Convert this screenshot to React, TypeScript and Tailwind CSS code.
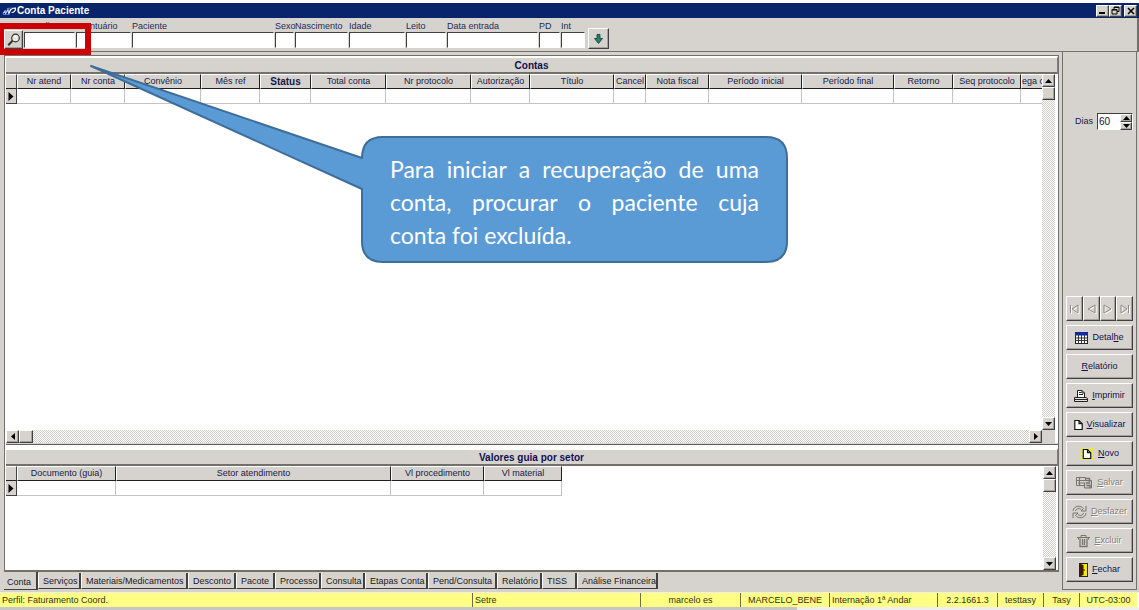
import React from "react";

const raised =
  "bg-[#d6d3ce] border border-t-white border-l-white border-r-[#404040] border-b-[#404040] shadow-[inset_-1px_-1px_0_#a5a29c]";
const dither =
  "bg-[repeating-conic-gradient(#ffffff_0_25%,#d0cdc8_0_50%)] bg-[length:2px_2px]";

type Field = { id: string; label: string; width: string };

const fields: Field[] = [
  { id: "atend", label: "Atendimento", width: "w-[52px]" },
  { id: "pront", label: "Prontuário", width: "w-[56px]" },
  { id: "pac", label: "Paciente", width: "w-[143px]" },
  { id: "sexo", label: "Sexo", width: "w-[20px]" },
  { id: "nasc", label: "Nascimento", width: "w-[54px]" },
  { id: "idade", label: "Idade", width: "w-[57px]" },
  { id: "leito", label: "Leito", width: "w-[41px]" },
  { id: "entrada", label: "Data entrada", width: "w-[92px]" },
  { id: "pd", label: "PD", width: "w-[22px]" },
  { id: "int", label: "Int", width: "w-[25px]" },
];

type Column = { label: string; width: string; bold?: boolean; clipped?: boolean };

const accountColumns: Column[] = [
  { label: "Nr atend", width: "w-[54px]" },
  { label: "Nr conta", width: "w-[54px]" },
  { label: "Convênio", width: "w-[76px]" },
  { label: "Mês ref", width: "w-[59px]" },
  { label: "Status", width: "w-[51px]", bold: true },
  { label: "Total conta", width: "w-[75px]" },
  { label: "Nr protocolo", width: "w-[85px]" },
  { label: "Autorização", width: "w-[59px]" },
  { label: "Título", width: "w-[84px]" },
  { label: "Cancel", width: "w-[32px]" },
  { label: "Nota fiscal", width: "w-[63px]" },
  { label: "Período inicial", width: "w-[93px]" },
  { label: "Período final", width: "w-[92px]" },
  { label: "Retorno", width: "w-[59px]" },
  { label: "Seq protocolo", width: "w-[68px]" },
  { label: "ega c", width: "w-[30px]", clipped: true },
];

const guideColumns: Column[] = [
  { label: "Documento (guia)", width: "w-[99px]" },
  { label: "Setor atendimento", width: "w-[275px]" },
  { label: "Vl procedimento", width: "w-[93px]" },
  { label: "Vl material", width: "w-[78px]" },
];

const tabs = [
  { label: "Conta", width: "w-[34px]" },
  { label: "Serviços", width: "w-[43px]" },
  { label: "Materiais/Medicamentos", width: "w-[107px]" },
  { label: "Desconto", width: "w-[48px]" },
  { label: "Pacote", width: "w-[39px]" },
  { label: "Processo", width: "w-[46px]" },
  { label: "Consulta", width: "w-[44px]" },
  { label: "Etapas Conta", width: "w-[63px]" },
  { label: "Pend/Consulta", width: "w-[69px]" },
  { label: "Relatório", width: "w-[45px]" },
  { label: "TISS", width: "w-[35px]" },
  { label: "Análise Financeira", width: "w-[81px]" },
];

const statusItems = [
  { text: "Setre", style: "w-[168px] pl-[2px]" },
  { text: "marcelo es", style: "w-[100px] text-center" },
  { text: "MARCELO_BENE", style: "w-[89px] text-center" },
  { text: "Internação 1ª Andar", style: "w-[108px] pl-[2px]" },
  { text: "2.2.1661.3", style: "w-[60px] text-center" },
  { text: "testtasy", style: "w-[46px] text-center" },
  { text: "Tasy", style: "w-[36px] text-center" },
  { text: "UTC-03:00", style: "w-[58px] text-center" },
];

function Arrow({ dir }: { dir: "up" | "down" | "left" | "right" }) {
  const d = {
    up: "M0 5 L3.500 1 L7 5Z",
    down: "M0 1 L3.500 5 L7 1Z",
    left: "M5 0 L1 3.500 L5 7Z",
    right: "M1 0 L5 3.500 L1 7Z",
  }[dir];
  const flat = dir === "up" || dir === "down";
  return (
    <svg width={flat ? 7 : 6} height={flat ? 6 : 7} viewBox={flat ? "0 0 7 6" : "0 0 6 7"} aria-hidden="true">
      <path d={d} fill="#000" />
    </svg>
  );
}

function ScrollButton({ dir, label }: { dir: "up" | "down" | "left" | "right"; label: string }) {
  return (
    <button aria-label={label} className={`${raised} flex size-[13px] shrink-0 items-center justify-center`}>
      <Arrow dir={dir} />
    </button>
  );
}

function VerticalScroll() {
  return (
    <div className={`${dither} flex w-[13px] shrink-0 flex-col`}>
      <ScrollButton dir="up" label="Rolar para cima" />
      <div className={`${raised} h-[13px]`} />
      <div className="flex-1" />
      <ScrollButton dir="down" label="Rolar para baixo" />
    </div>
  );
}

function SectionTitle({ children }: { children: React.ReactNode }) {
  return (
    <h2 className="h-[18px] shrink-0 border-t-2 border-r border-b-2 border-t-white border-r-[#808080] border-b-[#73706b] bg-[#d6d3ce] text-center text-[10px] leading-[15px] font-bold text-[#101050]">
      {children}
    </h2>
  );
}

function Grid({ columns }: { columns: Column[] }) {
  return (
    <table className="w-px table-fixed border-separate border-spacing-0 text-[#181848]">
      <thead>
        <tr>
          <th className="h-[15px] w-[11px] border-t border-r border-b border-t-white border-r-[#404040] border-b-[#202020] bg-[#d6d3ce] p-0" />
          {columns.map((c) => (
            <th
              key={c.label}
              className={`${c.width} h-[15px] border-t border-r border-b border-l border-t-white border-l-white border-r-[#202020] border-b-[#202020] bg-[#d6d3ce] p-0 leading-[13px] whitespace-nowrap ${c.bold ? "text-[10px] font-bold" : "font-normal"}`}
            >
              <div className={`flex ${c.clipped ? "justify-start" : "justify-center"}`}>{c.label}</div>
            </th>
          ))}
        </tr>
      </thead>
      <tbody>
        <tr>
          <td className="h-[15px] border-r border-b border-[#404040] bg-[#d6d3ce] p-0">
            <svg width="6" height="9" viewBox="0 0 6 9" className="mx-auto block" aria-hidden="true">
              <path d="M0.500 0 L5.500 4.500 L0.500 9Z" fill="#000" />
            </svg>
          </td>
          {columns.map((c) => (
            <td key={c.label} className="h-[15px] border-r border-b border-[#c4c4c4] bg-white p-0" />
          ))}
        </tr>
      </tbody>
    </table>
  );
}

function AppLogo() {
  return (
    <svg width="14" height="8" viewBox="0 0 14 8" aria-hidden="true">
      <path d="M1 6.500 L3 4 L3.500 6.500 L6 2.500 L6.500 6 L9 2" fill="none" stroke="#b9c8ff" strokeWidth="1.200" />
      <path d="M7 6.500 C8 2 10 1 13.500 1 C13.500 4 12 5.500 9.500 5.500" fill="none" stroke="#ffffff" strokeWidth="1.200" />
      <path d="M5 1.500 L10 1 M1 7.500 L8 7.300" stroke="#6f8ce8" strokeWidth="0.800" />
    </svg>
  );
}

function SearchIcon() {
  return (
    <svg width="14" height="14" viewBox="0 0 14 14" aria-hidden="true">
      <circle cx="8.500" cy="5" r="3.800" fill="#e9e9e6" stroke="#333" strokeWidth="1.200" />
      <path d="M7 4 Q8 2.800 9.500 3.200" fill="none" stroke="#fff" />
      <path d="M5.500 7.800 L1.200 12.200" stroke="#333" strokeWidth="2" />
    </svg>
  );
}

function DetailIcon() {
  return (
    <svg width="13" height="12" viewBox="0 0 13 12" aria-hidden="true">
      <rect x="0.500" y="0.500" width="12" height="11" fill="#fff" stroke="#222" />
      <rect x="0" y="0" width="13" height="3.500" fill="#1028a8" />
      <path d="M0 6H13M0 8.500H13M3.500 3V12M6.500 3V12M9.500 3V12" stroke="#333" />
    </svg>
  );
}

function PrintIcon() {
  return (
    <svg width="14" height="14" viewBox="0 0 14 14" fill="none" stroke="#222" aria-hidden="true">
      <path d="M3.500 8 V1.500 H8 L10.500 4 V8" fill="#fff" />
      <path d="M5 3.500H7.500M5 5.500H9M8 1.500V4H10.500" />
      <path d="M0.500 8.500H12L13.500 9.500V12.500H0.500Z" fill="#e6e4df" />
      <path d="M0.500 10.500H13" />
    </svg>
  );
}

function PageIcon({ glow = false }: { glow?: boolean }) {
  return (
    <svg width={glow ? 14 : 9} height="12" viewBox={glow ? "-2.5 0 14 12" : "0 0 9 12"} aria-hidden="true">
      {glow && <path d="M-1.500 0L10.500 12M10.500 0L-1.500 12M4.500 0V12M-2.500 6H11.500" stroke="#f7f000" strokeWidth="2" />}
      <path d="M0.800 1.500 H5 L8.200 4.700 V10.500 H0.800Z M5 1.500V4.700H8.200" fill="#fff" stroke="#111" strokeWidth="1.200" />
    </svg>
  );
}

function SaveIcon() {
  return (
    <svg width="17" height="13" viewBox="0 0 17 13" fill="none" stroke="#77756f" aria-hidden="true">
      <path d="M0.500 1.500H9.500V9.500H0.500Z M0.500 4.500H9.500M3.500 1.500V9.500M2 7H8" />
      <path d="M9.500 4.500H15.500V12H8.500V6.500" fill="#c9c6c1" />
      <path d="M10 2.500H13.500V6M10.500 9.500H14V12M10 7H14" strokeWidth="1.500" />
    </svg>
  );
}

function UndoIcon() {
  return (
    <svg width="15" height="14" viewBox="0 0 15 14" fill="none" stroke="#77756f" aria-hidden="true">
      <path d="M1 6C1.500 0.500 9 0 11.500 3.500M14 1V6H9L11.500 3.500" />
      <path d="M3.500 6C4 3.500 7.500 2.500 9.500 5" />
      <path d="M14 8C13.500 13.500 6 14 3.500 10.500M1 13V8H6L3.500 10.500" />
      <path d="M11.500 8C11 10.500 7.500 11.500 5.500 9" />
    </svg>
  );
}

function TrashIcon() {
  return (
    <svg width="13" height="14" viewBox="0 0 13 14" fill="none" stroke="#77756f" aria-hidden="true">
      <path d="M0 3.500H13M4 3V1.500H9V3M1.500 3.500V5.500M11.500 3.500V5.500" />
      <path d="M3 4.500V12.500H10V4.500M5.500 5V11M7.500 5V11" strokeWidth="1.300" />
    </svg>
  );
}

function DoorIcon() {
  return (
    <svg width="9" height="14" viewBox="0 0 9 14" aria-hidden="true">
      <rect x="0.500" y="0.500" width="8" height="13" fill="#f6e800" stroke="#222" />
      <path d="M0.500 0.500L4.500 2V12L0.500 13.500Z" fill="#3a1a08" />
      <path d="M5 6V8" stroke="#222" />
    </svg>
  );
}

type Action = { before: string; key: string; after: string; icon?: React.ReactNode; disabled?: boolean };

const actions: Action[] = [
  { before: "Detal", key: "h", after: "e", icon: <DetailIcon /> },
  { before: "", key: "R", after: "elatório" },
  { before: "", key: "I", after: "mprimir", icon: <PrintIcon /> },
  { before: "", key: "V", after: "isualizar", icon: <PageIcon /> },
  { before: "", key: "N", after: "ovo", icon: <PageIcon glow /> },
  { before: "", key: "S", after: "alvar", icon: <SaveIcon />, disabled: true },
  { before: "", key: "D", after: "esfazer", icon: <UndoIcon />, disabled: true },
  { before: "", key: "E", after: "xcluir", icon: <TrashIcon />, disabled: true },
  { before: "", key: "F", after: "echar", icon: <DoorIcon /> },
];

const navPaths = [
  { label: "Primeiro", d: "M1.500 1V9M9 1L3 5L9 9Z" },
  { label: "Anterior", d: "M9 1L2 5L9 9Z" },
  { label: "Próximo", d: "M2 1L9 5L2 9Z" },
  { label: "Último", d: "M9.500 1V9M2 1L8 5L2 9Z" },
];

function SidePanel() {
  return (
    <aside className="mr-[2px] flex w-[75px] shrink-0 flex-col border-r border-b border-l border-[#73706b] px-[3px] pb-[7px]">
      <div className="mt-[61px] flex items-center justify-end">
        <label htmlFor="dias" className="mr-1 text-[#181848]">
          Dias
        </label>
        <div className="flex h-[17px] w-[36px] border border-t-[#404040] border-r-white border-b-white border-l-[#404040] bg-white">
          <input id="dias" defaultValue="60" className="min-w-0 flex-1 bg-white pl-px text-[10px] text-[#101030] outline-none" />
          <div className="flex w-[12px] flex-col">
            <button aria-label="Aumentar" className={`${raised} flex flex-1 items-center justify-center`}>
              <Arrow dir="up" />
            </button>
            <button aria-label="Diminuir" className={`${raised} flex flex-1 items-center justify-center`}>
              <Arrow dir="down" />
            </button>
          </div>
        </div>
      </div>
      <div className="flex-1" />
      <div className="flex h-[25px]">
        {navPaths.map((n) => (
          <button key={n.label} disabled aria-label={n.label} className={`${raised} flex flex-1 items-center justify-center`}>
            <svg width="11" height="10" viewBox="0 0 11 10" fill="none" aria-hidden="true">
              <path d={n.d} stroke="#fff" transform="translate(1 1)" />
              <path d={n.d} stroke="#8d8a85" />
            </svg>
          </button>
        ))}
      </div>
      <div className="mt-1 flex flex-col gap-1">
        {actions.map((a) => (
          <button
            key={a.key}
            disabled={a.disabled}
            className={`${raised} flex h-[25px] items-center justify-center gap-1 ${a.disabled ? "text-[#85827c] [text-shadow:1px_1px_0_#fff]" : "text-[#101050]"}`}
          >
            {a.icon}
            <span>
              {a.before}
              <u>{a.key}</u>
              {a.after}
            </span>
          </button>
        ))}
      </div>
    </aside>
  );
}

function Callout() {
  return (
    <div className="pointer-events-none absolute top-[60px] left-[88px] h-[206px] w-[704px]">
      <svg width="704" height="206" viewBox="88 60 704 206" className="absolute inset-0" aria-hidden="true">
        <path
          d="M91 66 L362 158 Q362 137 383 137 H766 Q787 137 787 158 V241 Q787 262 766 262 H383 Q362 262 362 241 V189 Z"
          fill="#5b9bd5"
          stroke="#3f6d99"
          strokeWidth="2"
          strokeLinejoin="round"
        />
      </svg>
      <p className="relative mt-[93px] ml-[302px] w-[369px] text-justify font-['Lato','Noto_Sans',sans-serif] text-[23px] leading-[33px] text-white">
        Para iniciar a recuperação de uma conta, procurar o paciente cuja conta&nbsp;foi excluída.
      </p>
    </div>
  );
}

export default function App() {
  return (
    <div className="relative flex min-h-screen flex-col bg-[#d6d3ce] font-['Liberation_Sans',sans-serif] text-[9px] leading-[13px] text-[#101018]">
      <header className="flex h-[18px] items-center border-t-[3px] border-white bg-[#08246b] px-[2px] text-white">
        <AppLogo />
        <h1 className="ml-px flex-1 text-[10px] font-bold">Conta Paciente</h1>
        <div className="flex text-black">
          <button aria-label="Minimizar" className={`${raised} flex h-[12px] w-[13px] items-end justify-center pb-[2px]`}>
            <svg width="7" height="2" aria-hidden="true"><rect width="6" height="2" /></svg>
          </button>
          <button aria-label="Restaurar" className={`${raised} flex h-[12px] w-[13px] items-center justify-center`}>
            <svg width="9" height="9" viewBox="0 0 9 9" fill="none" stroke="#000" aria-hidden="true">
              <path d="M3 3V1H8V5.500H6M3 1.500H8M1 3.500H6V8H1ZM1 4H6" />
            </svg>
          </button>
          <button aria-label="Fechar janela" className={`${raised} ml-[2px] flex h-[12px] w-[13px] items-center justify-center`}>
            <svg width="8" height="8" viewBox="0 0 8 8" stroke="#000" strokeWidth="1.500" aria-hidden="true">
              <path d="M1 1L7 7M7 1L1 7" />
            </svg>
          </button>
        </div>
      </header>

      <div className="flex h-[34px] shrink-0 items-end border-r-2 border-b border-[#73706b] pb-[2px] pl-1">
        <button aria-label="Pesquisar" className={`${raised} mr-px flex size-[19px] items-center justify-center`}>
          <SearchIcon />
        </button>
        {fields.map((f) => (
          <div key={f.id} className={`${f.width} flex shrink-0 flex-col pr-px pb-px`}>
            <label htmlFor={f.id} className="h-[12px] leading-[12px] whitespace-nowrap text-[#282858]">
              {f.label}
            </label>
            <input
              id={f.id}
              className="h-[16px] w-full border border-t-[#404040] border-r-white border-b-white border-l-[#404040] bg-white px-[2px] outline-none"
            />
          </div>
        ))}
        <button aria-label="Carregar" className={`${raised} ml-[2px] flex size-[21px] items-center justify-center`}>
          <svg width="9" height="10" viewBox="0 0 9 10" aria-hidden="true">
            <path d="M3 0.500H6V4.500H8.500L4.500 9.500L0.500 4.500H3Z" fill="#1f8578" stroke="#16332f" strokeWidth="0.800" />
          </svg>
        </button>
      </div>

      <div className="flex flex-1">
        <main className="flex min-w-0 flex-1 flex-col pt-[3px] pr-[3px] pl-1">
          <div className="flex flex-1 flex-col border-t border-r border-b-2 border-l border-[#73706b] bg-white pl-px">
            <section className="flex flex-1 flex-col border-b border-[#606060]">
              <SectionTitle>Contas</SectionTitle>
              <div className="flex flex-1 border-b border-[#d6d3ce] pr-[3px]">
                <div className="flex min-w-0 flex-1 flex-col">
                  <div className="w-0 min-w-full flex-1 overflow-hidden">
                    <Grid columns={accountColumns} />
                  </div>
                  <div className={`${dither} flex h-[13px]`}>
                    <ScrollButton dir="left" label="Rolar para a esquerda" />
                    <div className={`${raised} w-[14px]`} />
                    <div className="flex-1" />
                    <ScrollButton dir="right" label="Rolar para a direita" />
                  </div>
                </div>
                <div className="flex flex-col bg-[#d6d3ce] pb-[13px]">
                  <div className="flex flex-1">
                    <VerticalScroll />
                  </div>
                </div>
              </div>
            </section>
            <section className="flex h-[125px] flex-col pt-[3px]">
              <SectionTitle>Valores guia por setor</SectionTitle>
              <div className="flex flex-1 pr-[2px]">
                <div className="min-w-0 flex-1 overflow-hidden">
                  <Grid columns={guideColumns} />
                </div>
                <VerticalScroll />
              </div>
            </section>
          </div>
          <nav className="flex h-[18px] shrink-0 items-start text-[#181820]">
            {tabs.map((t, i) => (
              <button
                key={t.label}
                className={`${t.width} border-b border-[#404040] text-left whitespace-nowrap ${i === 0 ? "h-[18px] border-r-2 pt-1 pl-[3px]" : "mt-px h-[16px] border-r-2 border-l border-l-white pt-px pl-1"}`}
              >
                {t.label}
              </button>
            ))}
          </nav>
        </main>
        <SidePanel />
      </div>

      <footer className="mt-[2px] flex h-[18px] shrink-0 flex-col border-t border-[#f2f0dc] bg-[#efefef]">
        <div className="flex h-[14px] border-r-2 border-white bg-[#ffff84] leading-[15px] text-[#303010]">
          <span className="min-w-0 flex-1 pl-[2px]">Perfil: Faturamento Coord.</span>
          {statusItems.map((s) => (
            <span key={s.text} className={`${s.style} shrink-0 border-l border-[#73703a] whitespace-nowrap`}>
              {s.text}
            </span>
          ))}
        </div>
        <div className="h-[3px] w-[70%] bg-[#c6c6c6]" />
      </footer>

      <div className="pointer-events-none absolute top-[23px] left-[-2px] h-[32px] w-[93px] border-[6px] border-[#cc0000]" />
      <Callout />
    </div>
  );
}
